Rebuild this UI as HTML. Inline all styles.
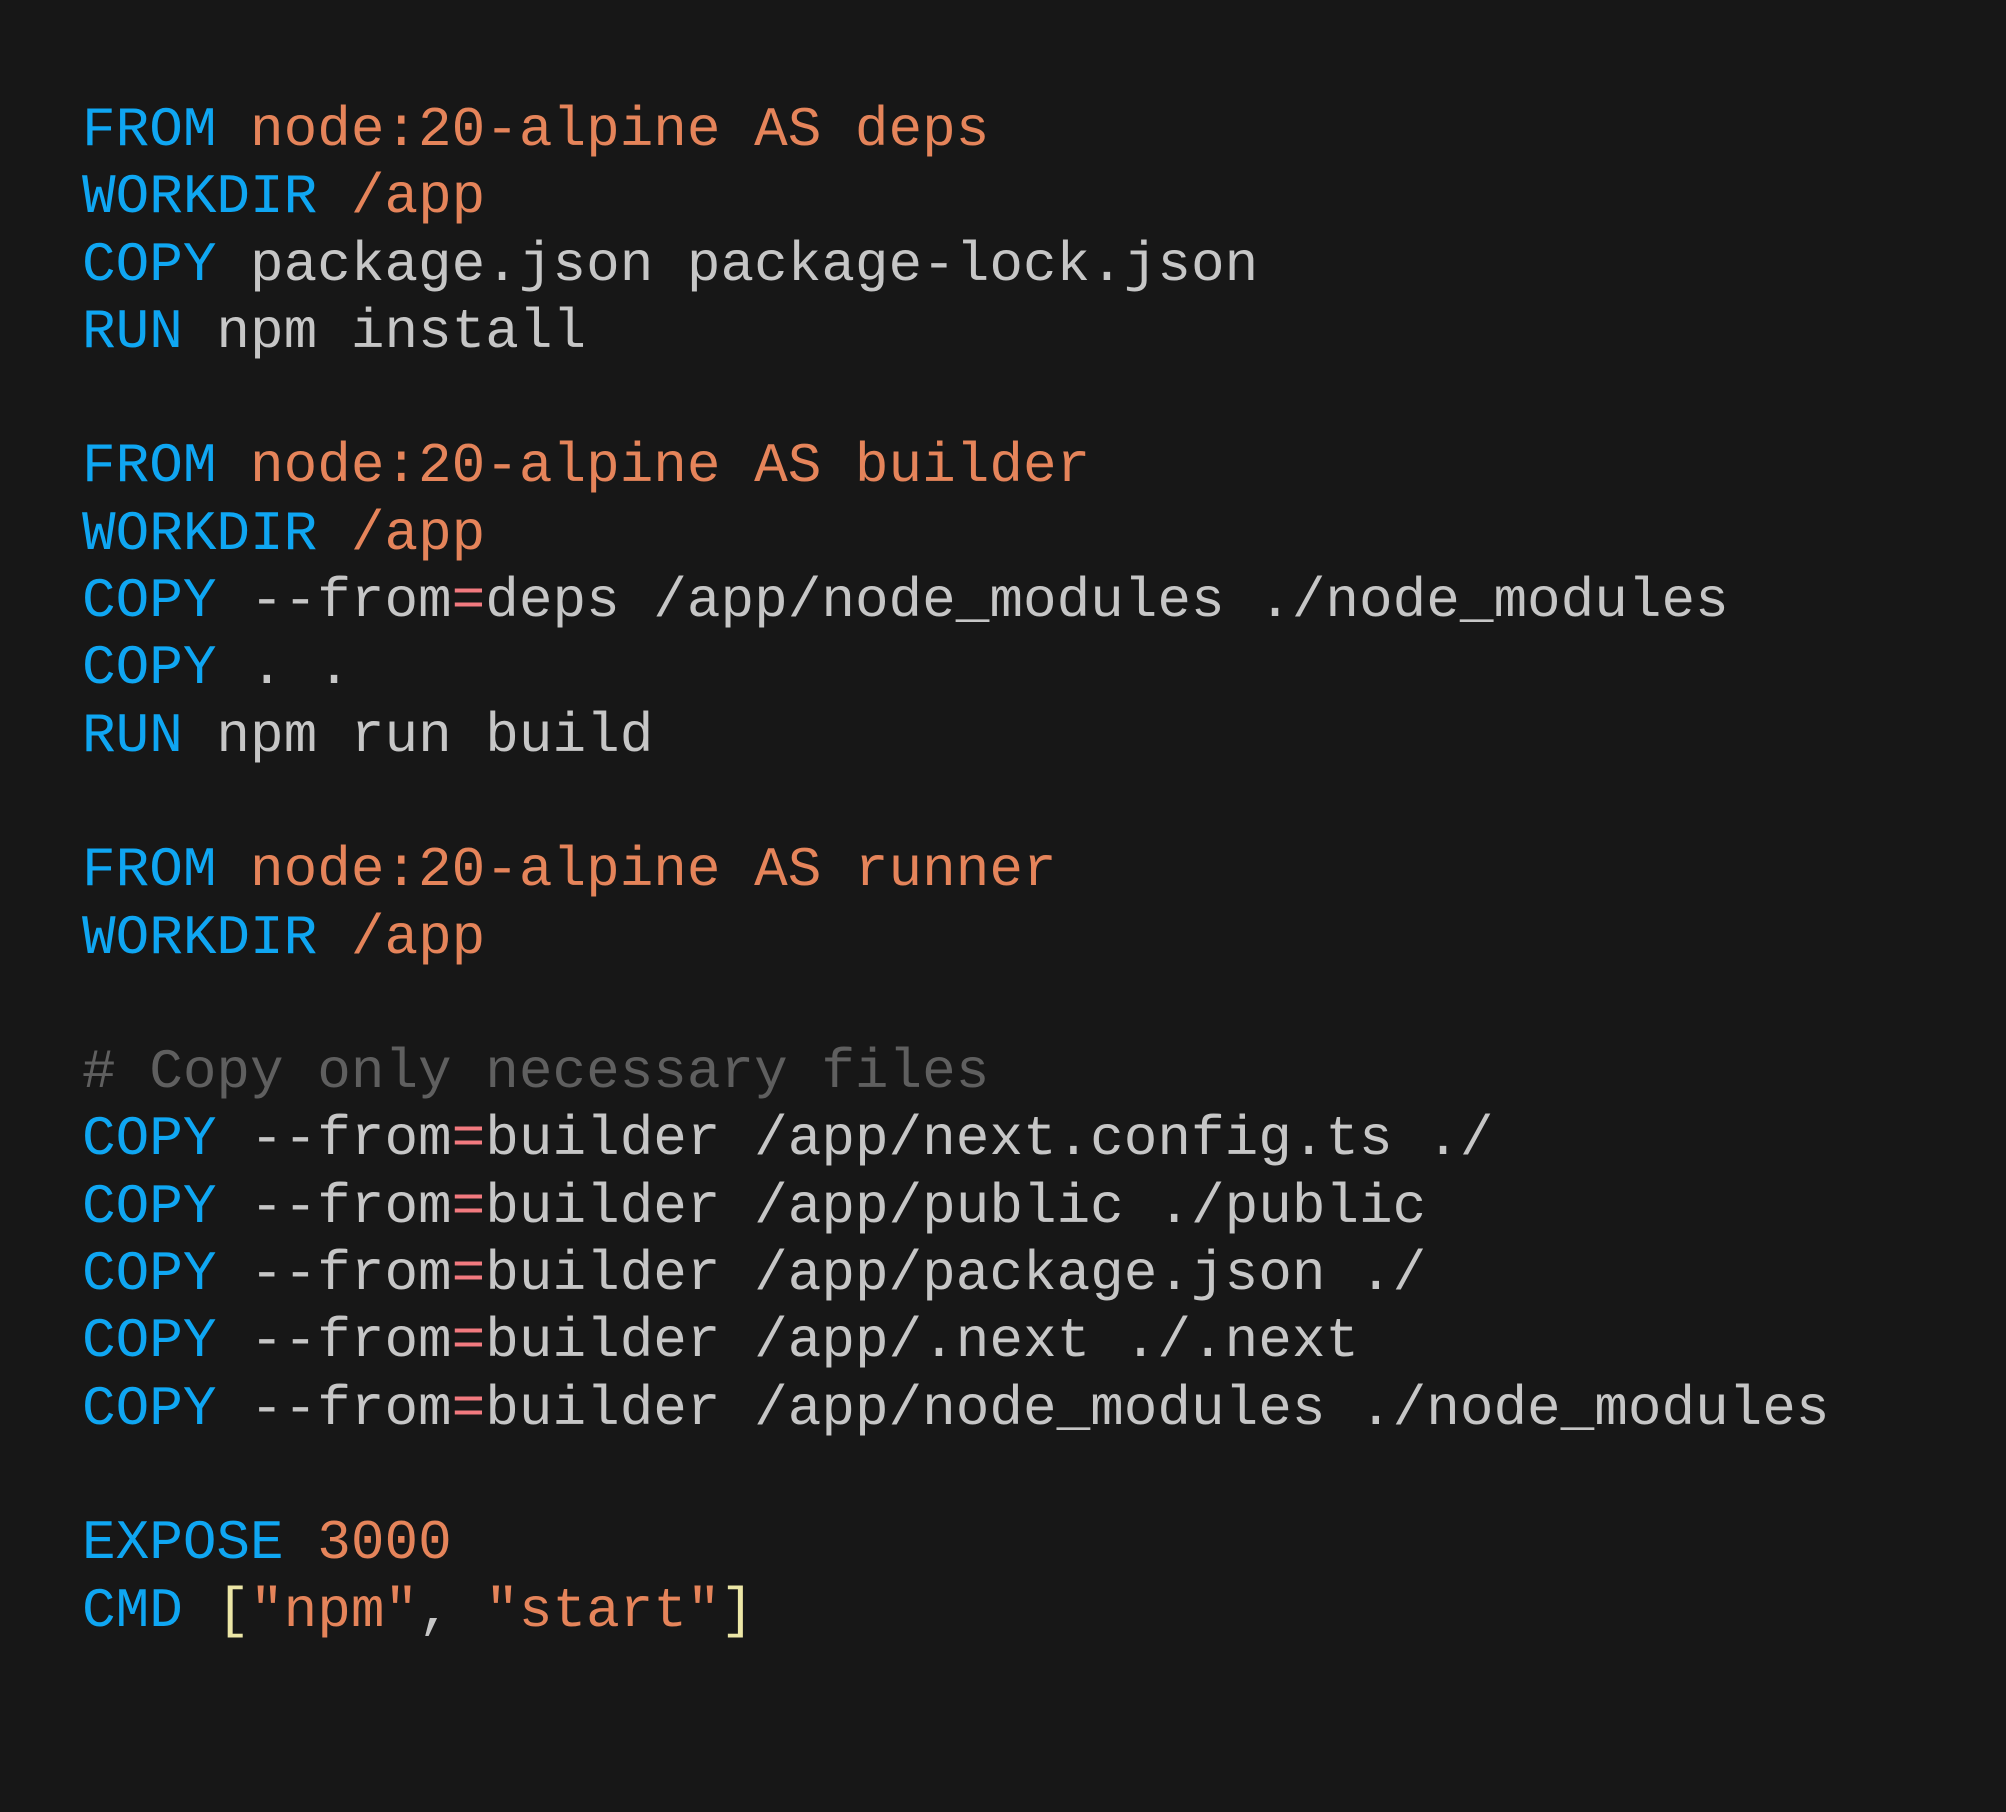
<!DOCTYPE html>
<html><head><meta charset="utf-8"><style>
html,body{margin:0;padding:0;background:#171717;width:2006px;height:1812px;overflow:hidden}
pre{margin:0;padding:97px 0 0 82px;font-family:"Liberation Mono",monospace;font-size:56px;line-height:67.3px;color:#c6c6c6}
.k{color:#0fa6f2}.o{color:#e5845a}.c{color:#5f5f5f}.p{color:#f27a7f}.y{color:#ece6a6}
</style></head><body><pre><span class="k">FROM</span> <span class="o">node:20-alpine AS deps</span>
<span class="k">WORKDIR</span> <span class="o">/app</span>
<span class="k">COPY</span> package.json package-lock.json
<span class="k">RUN</span> npm install

<span class="k">FROM</span> <span class="o">node:20-alpine AS builder</span>
<span class="k">WORKDIR</span> <span class="o">/app</span>
<span class="k">COPY</span> --from<span class="p">=</span>deps /app/node_modules ./node_modules
<span class="k">COPY</span> . .
<span class="k">RUN</span> npm run build

<span class="k">FROM</span> <span class="o">node:20-alpine AS runner</span>
<span class="k">WORKDIR</span> <span class="o">/app</span>

<span class="c"># Copy only necessary files</span>
<span class="k">COPY</span> --from<span class="p">=</span>builder /app/next.config.ts ./
<span class="k">COPY</span> --from<span class="p">=</span>builder /app/public ./public
<span class="k">COPY</span> --from<span class="p">=</span>builder /app/package.json ./
<span class="k">COPY</span> --from<span class="p">=</span>builder /app/.next ./.next
<span class="k">COPY</span> --from<span class="p">=</span>builder /app/node_modules ./node_modules

<span class="k">EXPOSE</span> <span class="o">3000</span>
<span class="k">CMD</span> <span class="y">[</span><span class="o">"npm"</span>, <span class="o">"start"</span><span class="y">]</span>
</pre></body></html>
